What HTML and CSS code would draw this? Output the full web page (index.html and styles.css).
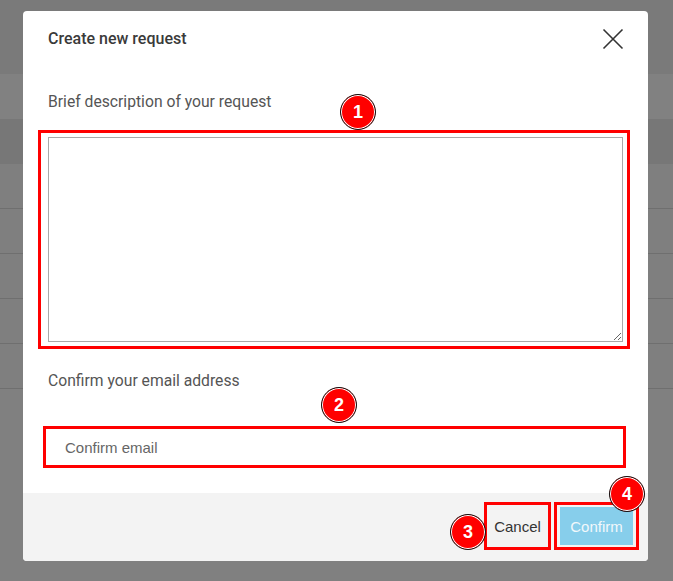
FILE: index.html
```html
<!DOCTYPE html>
<html lang="en">
<head>
<meta charset="utf-8">
<title>Create new request</title>
<link rel="stylesheet" href="styles.css">
</head>
<body>
<div class="backdrop">
  <div class="band band-top"></div>
  <div class="band band-light"></div>
  <div class="band band-dark"></div>
  <div class="row"></div>
  <div class="row"></div>
  <div class="row"></div>
  <div class="row"></div>
  <div class="row"></div>
</div>

<div class="modal">
  <div class="modal-header">
    <h2 class="modal-title">Create new request</h2>
    <svg class="close" width="22" height="22" viewBox="0 0 22 22" aria-label="Close">
      <path d="M1.5 1.5 L20.5 20.5 M20.5 1.5 L1.5 20.5" stroke="#333" stroke-width="1.6" fill="none"/>
    </svg>
  </div>
  <div class="modal-body">
    <label class="field-label">Brief description of your request</label>
    <div class="hl hl-area">
      <textarea class="textarea"></textarea>
    </div>
    <label class="field-label label-email">Confirm your email address</label>
    <div class="hl hl-email">
      <input class="email" type="text" placeholder="Confirm email">
    </div>
  </div>
  <div class="modal-footer">
    <div class="hl hl-btn"><button class="btn btn-cancel">Cancel</button></div>
    <div class="hl hl-btn hl-confirm"><button class="btn btn-confirm">Confirm</button></div>
  </div>
</div>

<span class="badge b1">1</span>
<span class="badge b2">2</span>
<span class="badge b3">3</span>
<span class="badge b4">4</span>
</body>
</html>
```
FILE: styles.css
```css
* { box-sizing: border-box; }
html, body { margin: 0; padding: 0; }
body {
  width: 673px;
  height: 581px;
  overflow: hidden;
  background: #808080;
  font-family: Roboto, "Liberation Sans", Arial, sans-serif;
  position: relative;
}
.backdrop { display: flex; flex-direction: column; }
.band-top { height: 74px; background: #7a7a7a; }
.band-light { height: 45px; background: #818181; }
.band-dark { height: 45px; background: #777777; }
.row { height: 45px; border-bottom: 1px solid #6f6f6f; background: #7f7f7f; }

.modal {
  position: absolute;
  left: 23px;
  top: 11px;
  width: 625px;
  height: 550px;
  background: #fff;
  border-radius: 4px;
  display: flex;
  flex-direction: column;
  overflow: hidden;
}
.modal-header {
  height: 56px;
  padding: 0 24px 0 25px;
  display: flex;
  align-items: center;
  justify-content: space-between;
}
.modal-title {
  margin: 0;
  font-size: 16px;
  font-weight: 500;
  color: #3a3a3a;
  line-height: 20px;
}
.close { display: block; margin-top: -1px; }

.modal-body {
  flex: 1;
  padding: 25px 25px 0 25px;
  display: flex;
  flex-direction: column;
}
.field-label {
  display: block;
  font-size: 15.7px;
  line-height: 20px;
  color: #555;
}
.hl { border: 3px solid #ff0000; }
.hl-area {
  margin: 18px -7px 0 -10px;
  padding: 4px 4px 4px 7px;
}
.textarea {
  display: block;
  width: 100%;
  height: 205px;
  border: 1px solid #a9a9a9;
  margin: 0;
  padding: 2px;
  font-family: inherit;
}
.label-email { margin-top: 22px; }
.hl-email {
  margin: 35px -3px 0 -5px;
  height: 42px;
}
.email {
  display: block;
  width: 100%;
  height: 36px;
  border: none;
  outline: none;
  padding: 0 0 0 19px;
  font-family: "Liberation Sans", Arial, sans-serif;
  font-size: 15px;
  color: #333;
  background: transparent;
}
.email::placeholder { color: #666; }

.modal-footer {
  height: 68px;
  background: #f3f3f3;
  display: flex;
  justify-content: flex-end;
  align-items: flex-start;
  gap: 3px;
  padding: 9px 9px 0 0;
}
.hl-btn { height: 48px; display: flex; align-items: center; justify-content: center; }
.btn {
  font-family: "Liberation Sans", Arial, sans-serif;
  font-size: 15px;
  border: none;
  margin: 0;
  cursor: pointer;
}
.btn-cancel {
  width: 61px;
  height: 42px;
  padding: 0;
  background: transparent;
  color: #333;
}
.btn-confirm {
  width: 73px;
  height: 38px;
  margin: 0 3px;
  padding: 0;
  background: #87ceeb;
  color: #f2f8fb;
}

.badge {
  position: absolute;
  width: 36px;
  height: 36px;
  border-radius: 50%;
  background: #ff0000;
  border: 1px solid #111;
  box-shadow: inset 0 0 0 1px #fff;
  color: #fff;
  font-family: "Liberation Sans", Arial, sans-serif;
  font-weight: bold;
  font-size: 18px;
  display: flex;
  align-items: center;
  justify-content: center;
}
.b1 { left: 340px; top: 94px; }
.b2 { left: 321px; top: 387px; }
.b3 { left: 450px; top: 514px; }
.b4 { left: 609px; top: 476px; }
```
